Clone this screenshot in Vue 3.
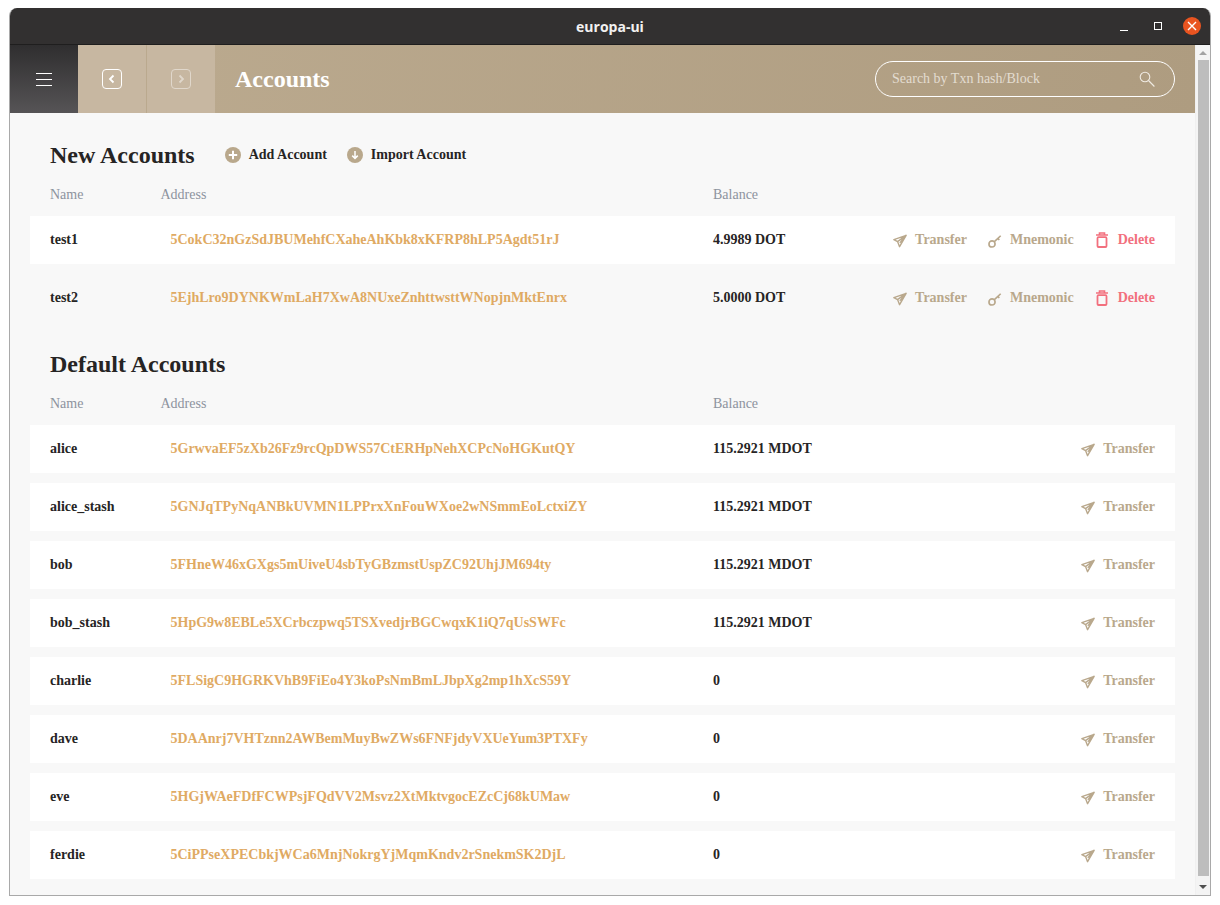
<template>
  <div class="window">
    <div class="titlebar">
      <span class="title-text">europa-ui</span>
      <div class="win-controls">
        <span class="win-min"></span>
        <span class="win-max"></span>
        <span class="win-close">
          <svg viewBox="0 0 18 18" width="18" height="18">
            <path d="M5 5l8 8M13 5l-8 8" stroke="#fff" stroke-width="1.4" fill="none" />
          </svg>
        </span>
      </div>
    </div>
    <div class="body">
      <div class="page">
        <header class="top">
          <button class="menu-btn">
            <span></span><span></span><span></span>
          </button>
          <button class="nav-btn">
            <svg viewBox="0 0 20 20" width="20" height="20">
              <rect x="0.5" y="0.5" width="19" height="19" rx="3.5" fill="none" stroke="#fff" />
              <path d="M11.5 6.5L8 10l3.5 3.5" fill="none" stroke="#fff" stroke-width="1.8" />
            </svg>
          </button>
          <button class="nav-btn dim">
            <svg viewBox="0 0 20 20" width="20" height="20">
              <rect x="0.5" y="0.5" width="19" height="19" rx="3.5" fill="none" stroke="#fff" />
              <path d="M8.5 6.5L12 10l-3.5 3.5" fill="none" stroke="#fff" stroke-width="1.8" />
            </svg>
          </button>
          <h1 class="page-title">Accounts</h1>
          <div class="search">
            <span class="search-text">Search by Txn hash/Block</span>
            <svg viewBox="0 0 16 16" width="16" height="16">
              <circle cx="6" cy="6" r="4.8" fill="none" stroke="#f0ebe3" stroke-width="1.1" />
              <path d="M9.5 9.5l5.9 6" stroke="#f0ebe3" stroke-width="1.1" fill="none" />
            </svg>
          </div>
        </header>

        <main class="content">
          <section class="section">
            <div class="section-head">
              <h2>New Accounts</h2>
              <a class="head-action">
                <svg viewBox="0 0 16 16" width="16" height="16">
                  <circle cx="8" cy="8" r="8" fill="#b9a88c" />
                  <path d="M8 3.8v8.4M3.8 8h8.4" stroke="#fff" stroke-width="2" />
                </svg>
                Add Account
              </a>
              <a class="head-action">
                <svg viewBox="0 0 16 16" width="16" height="16">
                  <circle cx="8" cy="8" r="8" fill="#b9a88c" />
                  <path d="M8 4v7M5.2 8.6L8 11.4l2.8-2.8" stroke="#fff" stroke-width="1.5" fill="none" />
                </svg>
                Import Account
              </a>
            </div>
            <div class="row-grid columns">
              <span>Name</span>
              <span>Address</span>
              <span>Balance</span>
            </div>
            <div
                v-for="(acc, i) in newAccounts"
                :key="acc.name"
                class="row-grid row"
                :class="{ plain: i % 2 === 1 }"
            >
              <span class="name">{{ acc.name }}</span>
              <span class="address">{{ acc.address }}</span>
              <span class="balance">{{ acc.balance }}</span>
              <div class="actions">
                <a class="action">
                  <svg viewBox="0 0 16 16" width="14" height="14">
                    <path d="M15 1.5L1 6.5l4.2 2.2L7.5 14.5zM15 1.5L5.2 8.7M15 1.5L7.8 10.2" fill="none" stroke="currentColor" stroke-width="1.6" stroke-linejoin="round" />
                  </svg>
                  Transfer
                </a>
                <a class="action">
                  <svg viewBox="0 0 16 16" width="14" height="14">
                    <circle cx="4.6" cy="11.4" r="3.5" fill="none" stroke="currentColor" stroke-width="1.9" />
                    <path d="M7 9l7.5-7M11.2 5.2l1.8 1.6" fill="none" stroke="currentColor" stroke-width="1.9" />
                  </svg>
                  Mnemonic
                </a>
                <a class="action danger">
                  <svg class="trash" viewBox="0 0 12 16" width="12" height="16">
                    <path d="M0 3h12M3.5 3V1h5v2" fill="none" stroke="currentColor" stroke-width="1.6" />
                    <rect x="1.5" y="5.2" width="9" height="9.8" rx="1" fill="none" stroke="currentColor" stroke-width="1.8" />
                  </svg>
                  Delete
                </a>
              </div>
            </div>
          </section>

          <section class="section second">
            <div class="section-head">
              <h2>Default Accounts</h2>
            </div>
            <div class="row-grid columns">
              <span>Name</span>
              <span>Address</span>
              <span>Balance</span>
            </div>
            <div v-for="acc in defaultAccounts" :key="acc.name" class="row-grid row">
              <span class="name">{{ acc.name }}</span>
              <span class="address">{{ acc.address }}</span>
              <span class="balance">{{ acc.balance }}</span>
              <div class="actions">
                <a class="action">
                  <svg viewBox="0 0 16 16" width="14" height="14">
                    <path d="M15 1.5L1 6.5l4.2 2.2L7.5 14.5zM15 1.5L5.2 8.7M15 1.5L7.8 10.2" fill="none" stroke="currentColor" stroke-width="1.6" stroke-linejoin="round" />
                  </svg>
                  Transfer
                </a>
              </div>
            </div>
          </section>
        </main>
      </div>
      <div class="scrollbar">
        <span class="arrow up"></span>
        <span class="thumb"></span>
        <span class="arrow down"></span>
      </div>
    </div>
  </div>
</template>

<script setup>
const newAccounts = [
  { name: 'test1', address: '5CokC32nGzSdJBUMehfCXaheAhKbk8xKFRP8hLP5Agdt51rJ', balance: '4.9989 DOT' },
  { name: 'test2', address: '5EjhLro9DYNKWmLaH7XwA8NUxeZnhttwsttWNopjnMktEnrx', balance: '5.0000 DOT' }
];

const defaultAccounts = [
  { name: 'alice', address: '5GrwvaEF5zXb26Fz9rcQpDWS57CtERHpNehXCPcNoHGKutQY', balance: '115.2921 MDOT' },
  { name: 'alice_stash', address: '5GNJqTPyNqANBkUVMN1LPPrxXnFouWXoe2wNSmmEoLctxiZY', balance: '115.2921 MDOT' },
  { name: 'bob', address: '5FHneW46xGXgs5mUiveU4sbTyGBzmstUspZC92UhjJM694ty', balance: '115.2921 MDOT' },
  { name: 'bob_stash', address: '5HpG9w8EBLe5XCrbczpwq5TSXvedjrBGCwqxK1iQ7qUsSWFc', balance: '115.2921 MDOT' },
  { name: 'charlie', address: '5FLSigC9HGRKVhB9FiEo4Y3koPsNmBmLJbpXg2mp1hXcS59Y', balance: '0' },
  { name: 'dave', address: '5DAAnrj7VHTznn2AWBemMuyBwZWs6FNFjdyVXUeYum3PTXFy', balance: '0' },
  { name: 'eve', address: '5HGjWAeFDfFCWPsjFQdVV2Msvz2XtMktvgocEZcCj68kUMaw', balance: '0' },
  { name: 'ferdie', address: '5CiPPseXPECbkjWCa6MnjNokrgYjMqmKndv2rSnekmSK2DjL', balance: '0' }
];
</script>

<style>
html, body {
  margin: 0;
  background: #fff;
  overflow: hidden;
}
</style>

<style scoped>
.window {
  width: 1202px;
  height: 888px;
  margin: 8px 0 0 9px;
  border: 1px solid #a9a9a9;
  border-top: 0;
  border-radius: 8px 8px 0 0;
  overflow: hidden;
  display: flex;
  flex-direction: column;
  font-family: "Liberation Serif", serif;
  box-sizing: border-box;
}

.titlebar {
  height: 37px;
  flex: none;
  box-sizing: border-box;
  background: #323030;
  border-bottom: 1px solid #1f1e1e;
  position: relative;
  display: flex;
  align-items: center;
  justify-content: center;
}

.title-text {
  font-family: "Open Sans", sans-serif;
  font-size: 14px;
  font-weight: 700;
  color: #f2f1f0;
}

.win-controls {
  position: absolute;
  right: 9px;
  top: 9px;
  display: flex;
  align-items: center;
}

.win-min {
  width: 8px;
  height: 1px;
  background: #fff;
  margin: 8px 0 0;
}

.win-max {
  width: 6px;
  height: 6px;
  border: 1px solid #fff;
  margin: 0 21px 0 26px;
}

.win-close {
  width: 18px;
  height: 18px;
  border-radius: 50%;
  background: #e95420;
  display: block;
}

.body {
  flex: 1;
  min-height: 0;
  display: flex;
  background: #f8f8f8;
}

.page {
  flex: 1;
  min-width: 0;
}

.top {
  height: 68px;
  display: flex;
  align-items: center;
  padding-right: 20px;
  background: linear-gradient(100deg, #bcab90 0%, #ae9c80 100%);
}

.menu-btn {
  width: 68px;
  height: 68px;
  border: 0;
  padding: 0;
  background: linear-gradient(#2f2e2f, #565456);
  display: flex;
  flex-direction: column;
  align-items: center;
  justify-content: center;
  gap: 5px;
}

.menu-btn span {
  width: 16px;
  height: 1px;
  background: #fff;
}

.nav-btn {
  width: 68px;
  height: 68px;
  border: 0;
  padding: 0;
  margin-right: 1px;
  background: #c7b7a1;
  display: flex;
  align-items: center;
  justify-content: center;
}

.nav-btn.dim svg {
  opacity: 0.45;
}

.nav-btn.dim {
  margin-right: 0;
}

.page-title {
  margin: 0 0 0 20px;
  font-size: 24px;
  font-weight: 700;
  color: #fff;
  flex: 1;
}

.search {
  width: 300px;
  height: 36px;
  box-sizing: border-box;
  border: 1px solid #fff;
  border-radius: 18px;
  padding: 0 19px 0 16px;
  display: flex;
  align-items: center;
  justify-content: space-between;
}

.search-text {
  font-size: 14px;
  color: #e3dcd0;
}

.content {
  padding: 20px 20px 0;
}

.section-head {
  display: flex;
  align-items: center;
  height: 44px;
  padding-left: 20px;
}

.section-head h2 {
  margin: 0 30px 0 0;
  font-size: 24px;
  font-weight: 700;
  color: #262424;
}

.head-action {
  display: flex;
  align-items: center;
  gap: 8px;
  margin-right: 20px;
  font-size: 14px;
  font-weight: 700;
  color: #262424;
}

.row-grid {
  display: grid;
  grid-template-columns: 110.5px 552.5px 1fr auto;
  align-items: center;
  padding: 0 20px;
  font-size: 14px;
}

.columns {
  height: 24px;
  margin: 6px 0 9px;
  color: #8d939e;
}

.row {
  height: 48px;
  margin-bottom: 10px;
  background: #fff;
  font-weight: 700;
}

.row.plain {
  background: transparent;
}

.name {
  color: #262424;
}

.address {
  padding-left: 10px;
  color: #dfaa63;
}

.balance {
  color: #262424;
}

.actions {
  display: flex;
  align-items: center;
  gap: 21px;
}

.action {
  display: flex;
  align-items: center;
  gap: 8px;
  color: #b9a88c;
}

.action svg {
  margin-top: 2px;
}

.action .trash {
  margin-top: 0;
  margin-right: 2px;
}

.action.danger {
  margin-left: 1px;
  color: #f2707e;
}

.second {
  margin-top: 20px;
}

.scrollbar {
  width: 15px;
  flex: none;
  box-sizing: border-box;
  background: #f4f4f4;
  display: flex;
  flex-direction: column;
  align-items: center;
  border-left: 1px solid #f0f0f0;
}

.thumb {
  flex: 1;
  width: 11px;
  background: #bdbdbd;
  margin: 5px 0 9px;
}

.arrow {
  width: 0;
  height: 0;
  border-left: 4px solid transparent;
  border-right: 4px solid transparent;
  margin-top: 6px;
}

.arrow.up {
  border-bottom: 4px solid #a3a3a3;
}

.arrow.down {
  border-top: 4px solid #505050;
  margin: 0 0 6px;
}
</style>
